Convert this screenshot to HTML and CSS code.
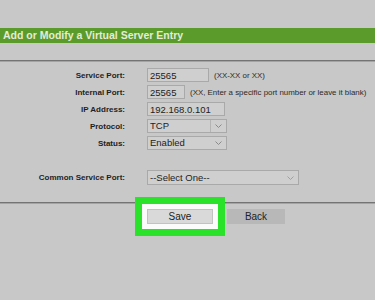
FILE: index.html
```html
<!DOCTYPE html>
<html lang="en">
<head>
  <meta charset="UTF-8">
  <meta name="viewport" content="width=device-width, initial-scale=1.0">
  <title>Virtual Server Entry</title>
  <link rel="stylesheet" href="styles.css">
</head>
<body>
  <div id="page">
    <h2 class="title-bar">Add or Modify a Virtual Server Entry</h2>
    <hr class="divider top">

    <form id="entry-form">
      <label class="field-label">Service Port:</label>
      <div class="field">
        <input type="text" class="box w-service" value="25565">
        <span class="hint">(XX-XX or XX)</span>
      </div>

      <label class="field-label">Internal Port:</label>
      <div class="field">
        <input type="text" class="box w-internal" value="25565">
        <span class="hint">(XX, Enter a specific port number or leave it blank)</span>
      </div>

      <label class="field-label">IP Address:</label>
      <div class="field">
        <input type="text" class="box w-ip" value="192.168.0.101">
      </div>

      <label class="field-label">Protocol:</label>
      <div class="field">
        <div class="box select w-select split">
          <span>TCP</span>
          <svg class="chevron" width="7" height="4" viewBox="0 0 7 4"><path d="M0.5 0.5 L3.5 3.5 L6.5 0.5" fill="none" stroke="#8a8a8a" stroke-width="1"/></svg>
        </div>
      </div>

      <label class="field-label">Status:</label>
      <div class="field">
        <div class="box select w-select">
          <span>Enabled</span>
          <svg class="chevron" width="7" height="4" viewBox="0 0 7 4"><path d="M0.5 0.5 L3.5 3.5 L6.5 0.5" fill="none" stroke="#8a8a8a" stroke-width="1"/></svg>
        </div>
      </div>

      <label class="field-label common">Common Service Port:</label>
      <div class="field common">
        <div class="box select w-common">
          <span>--Select One--</span>
          <svg class="chevron" width="7" height="4" viewBox="0 0 7 4"><path d="M0.5 0.5 L3.5 3.5 L6.5 0.5" fill="none" stroke="#a0a0a0" stroke-width="1"/></svg>
        </div>
      </div>
    </form>

    <hr class="divider bottom">

    <div class="actions">
      <button type="button" class="btn save">Save</button>
      <button type="button" class="btn back">Back</button>
    </div>
  </div>
</body>
</html>
```

FILE: styles.css
```css
/* Global styling */
* {
  margin: 0;
  padding: 0;
  box-sizing: border-box;
  font-family: 'Liberation Sans', Arial, sans-serif;
}

body {
  background-color: #c8c8c8;
  color: #222;
  height: 300px;
  overflow: hidden;
}

#page {
  padding-top: 28px;
}

.title-bar {
  height: 15px;
  line-height: 15px;
  padding-left: 3px;
  background-color: #5a9b2c; /* router green */
  color: #e4ecd8;
  font-size: 10.5px;
  font-weight: bold;
}

.divider {
  border: none;
  height: 2px;
  border-top: 1px solid #747474;
  border-bottom: 1px solid #a4a4a4;
}

.divider.top {
  margin-top: 17px;
}

#entry-form {
  display: grid;
  grid-template-columns: 125px auto;
  column-gap: 22px;
  row-gap: 3px;
  margin-top: 6px;
  align-items: center;
}

.field-label {
  text-align: right;
  font-size: 8px;
  font-weight: bold;
  color: #1e1e1e;
}

.field-label.common,
.field.common {
  margin-top: 17px;
}

.field {
  display: flex;
  align-items: center;
  gap: 5px;
}

.box {
  height: 14px;
  border: 1px solid #a9a9a9;
  background-color: #cfcfcf;
  font-size: 9.5px;
  color: #222;
  padding: 0 2px;
  line-height: 12px;
}

input.box {
  outline: none;
}

.select {
  display: flex;
  align-items: center;
  justify-content: space-between;
  padding-right: 4px;
}

.select.split .chevron {
  border-left: 1px solid #b4b4b4;
  padding-left: 4px;
  height: 12px;
  width: 12px;
}

.w-service { width: 62px; }
.w-internal { width: 38px; }
.w-ip { width: 78px; }
.w-select { width: 80px; }
.w-common { width: 152px; height: 15px; }

.hint {
  font-size: 7.9px;
  color: #2a2a2a;
  white-space: nowrap;
}

.divider.bottom {
  margin-top: 17px;
}

.actions {
  display: flex;
  gap: 14px;
  margin-top: 5px;
  padding-left: 147px;
}

.btn {
  height: 15px;
  border: none;
  font-size: 10px;
  color: #222;
}

.save {
  width: 66px;
  background-color: #d9d9d9;
  border: 1px solid #c2c2c2;
  /* highlight ring from the tutorial screenshot */
  box-shadow: 0 0 0 5px #fbfbfb, 0 0 0 12px #2ae22a;
}

.back {
  width: 58px;
  background-color: #b8b8b8;
}
```
